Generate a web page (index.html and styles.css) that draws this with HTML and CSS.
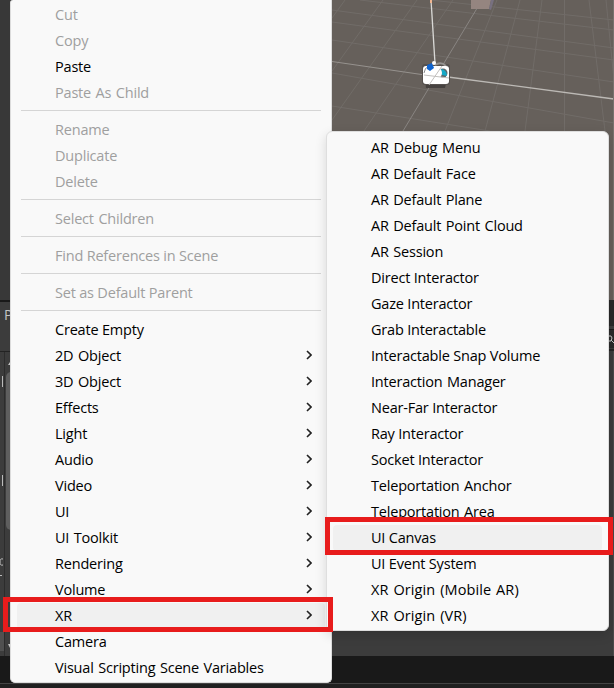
FILE: index.html
```html
<!DOCTYPE html>
<html lang="en">
<head>
<meta charset="utf-8">
<title>Hierarchy context menu</title>
<link rel="stylesheet" href="styles.css">
</head>
<body>
<svg class="editor" width="614" height="688" viewBox="0 0 614 688">
  <rect width="614" height="688" fill="#3c3c3c"/>
  <rect width="10" height="300" fill="#383838"/>
  <rect y="300" width="10" height="2" fill="#191919"/>
  <rect y="351" width="10" height="1" fill="#232323"/>
  <rect x="4" y="352" width="1" height="304" fill="#2c2c2c"/>
  <path d="M8 365l4-6v6z" fill="#c4c4c4"/>
  <rect x="6" y="372" width="20" height="158" rx="5" fill="#5e5e5e"/>
  <path d="M2.500 376v11M2.500 475v11" stroke="#bbb"/>
  <path d="M3 559q-3-1-3 3t3 3M0 575.500h2" stroke="#bbb" fill="none"/>
  <rect y="632" width="4" height="19" fill="#505050"/>
  <path d="M8 644h5l-3 4z" fill="#c4c4c4"/>
  <rect y="656" width="614" height="27" fill="#191919"/>
  <rect y="683" width="614" height="1" fill="#444"/>
  <rect y="684" width="614" height="4" fill="#202020"/>
  <svg x="332" y="0" width="282" height="300" viewBox="332 0 282 300">
    <rect x="332" width="282" height="300" fill="#66605b"/>
    <g stroke="#716c68" fill="none">
      <path d="M332 18L345 0M332 71L383 0M332 120L417 0M364 131L453 0M445 131L497 0M485 131L520 0M525 131L542 0M564.500 131V0M605 131L589 0M614 80L606 0"/>
      <path d="M332 10L614 48M332 22L614 60M332 40L614 82M332 73L614 123M332 106L490 131M360 0L614 30M430 0L614 20"/>
    </g>
    <path d="M403 131L479 5" stroke="#898582"/>
    <path d="M332 61.500L425 75" stroke="#96928e"/>
    <path d="M448 77L614 99" stroke="#bcb9b5" stroke-width="1.300"/>
    <path d="M471 0h20l-2 9h-18z" fill="#958580"/>
    <path d="M491 0h3l-3 10-2-1z" fill="#777080"/>
    <path d="M431 0L435 63" stroke="#d9d8d6" stroke-width="1.300"/>
    <path d="M430 0h2v3h-2z" fill="#f0b590"/>
    <path d="M425 79h22l-2 9h-19z" fill="#45413f"/>
    <rect x="422" y="64" width="28" height="21" rx="3" fill="#56514e"/>
    <path d="M435 65q6-4 11 1" stroke="#969390" stroke-width="2" fill="none"/>
    <rect x="423" y="66" width="26" height="18" rx="3" fill="#fff"/>
    <path d="M424 73q1-6 4-6" stroke="#88898b" fill="none"/>
    <circle cx="443" cy="73" r="4.500" fill="#5b666a"/>
    <path d="M441 69q6 1 6 7l-5-1z" fill="#16a9c7"/>
    <circle cx="436" cy="73" r="6" fill="#fff"/>
    <path d="M427 65l5-2 2 5-4 3-3-2z" fill="#1064cf"/>
    <circle cx="434" cy="63" r="2" fill="#fff"/>
    <path d="M429 85L442 66M424 75l25 3" stroke="#c2c0be"/>
  </svg>
  <rect x="613" width="1" height="300" fill="#77726e"/>
  <rect x="609" y="300" width="5" height="28" fill="#282828"/>
  <rect x="609" y="326" width="5" height="3" fill="#3c3c3c"/>
  <rect x="609" y="329" width="5" height="1" fill="#191919"/>
  <rect x="609" y="330" width="5" height="18" fill="#2a2a2a"/>
  <path d="M609 336h2l1 2-1 3h-2M611 340l3 3" stroke="#c4c4c4" fill="none"/>
  <rect x="609" y="349" width="5" height="2" fill="#242424"/>
  <rect x="609" y="351" width="5" height="280" fill="#3b3b3b"/>
  <rect x="613" y="351" width="1" height="305" fill="#4a4a4a"/>
</svg>
<span class="tab-label">P</span>

<ul class="menu main">
  <li class="off"><span>Cut</span></li>
  <li class="off"><span>Copy</span></li>
  <li><span>Paste</span></li>
  <li class="off"><span>Paste As Child</span></li>
  <li class="sep"></li>
  <li class="off"><span>Rename</span></li>
  <li class="off"><span>Duplicate</span></li>
  <li class="off"><span>Delete</span></li>
  <li class="sep"></li>
  <li class="off"><span>Select Children</span></li>
  <li class="sep"></li>
  <li class="off snug"><span>Find References in Scene</span></li>
  <li class="sep"></li>
  <li class="off snug"><span>Set as Default Parent</span></li>
  <li class="sep"></li>
  <li class="snug"><span>Create Empty</span></li>
  <li><span>2D Object</span><svg class="arrow" viewBox="0 0 6 10"><path d="M1 1l4 4-4 4"/></svg></li>
  <li><span>3D Object</span><svg class="arrow" viewBox="0 0 6 10"><path d="M1 1l4 4-4 4"/></svg></li>
  <li><span>Effects</span><svg class="arrow" viewBox="0 0 6 10"><path d="M1 1l4 4-4 4"/></svg></li>
  <li><span>Light</span><svg class="arrow" viewBox="0 0 6 10"><path d="M1 1l4 4-4 4"/></svg></li>
  <li><span>Audio</span><svg class="arrow" viewBox="0 0 6 10"><path d="M1 1l4 4-4 4"/></svg></li>
  <li><span>Video</span><svg class="arrow" viewBox="0 0 6 10"><path d="M1 1l4 4-4 4"/></svg></li>
  <li><span>UI</span><svg class="arrow" viewBox="0 0 6 10"><path d="M1 1l4 4-4 4"/></svg></li>
  <li><span>UI Toolkit</span><svg class="arrow" viewBox="0 0 6 10"><path d="M1 1l4 4-4 4"/></svg></li>
  <li><span>Rendering</span><svg class="arrow" viewBox="0 0 6 10"><path d="M1 1l4 4-4 4"/></svg></li>
  <li><span>Volume</span><svg class="arrow" viewBox="0 0 6 10"><path d="M1 1l4 4-4 4"/></svg></li>
  <li class="active"><span>XR</span><svg class="arrow" viewBox="0 0 6 10"><path d="M1 1l4 4-4 4"/></svg></li>
  <li><span>Camera</span></li>
  <li><span>Visual Scripting Scene Variables</span></li>
</ul>

<ul class="menu sub">
  <li class="wide"><span>AR Debug Menu</span></li>
  <li><span>AR Default Face</span></li>
  <li><span>AR Default Plane</span></li>
  <li><span>AR Default Point Cloud</span></li>
  <li><span>AR Session</span></li>
  <li class="snug"><span>Direct Interactor</span></li>
  <li class="snug"><span>Gaze Interactor</span></li>
  <li class="snug"><span>Grab Interactable</span></li>
  <li class="snug"><span>Interactable Snap Volume</span></li>
  <li><span>Interaction Manager</span></li>
  <li class="snug"><span>Near-Far Interactor</span></li>
  <li class="snug"><span>Ray Interactor</span></li>
  <li class="snug"><span>Socket Interactor</span></li>
  <li><span>Teleportation Anchor</span></li>
  <li><span>Teleportation Area</span></li>
  <li class="active snug"><span>UI Canvas</span></li>
  <li class="snug"><span>UI Event System</span></li>
  <li class="wider"><span>XR Origin (Mobile AR)</span></li>
  <li class="wider"><span>XR Origin (VR)</span></li>
</ul>

<div class="mark mark-xr"></div>
<div class="mark mark-canvas"></div>
</body>
</html>
```
FILE: styles.css
```css
body {
  margin: 0;
  width: 614px;
  height: 688px;
  position: relative;
  overflow: hidden;
  background: #3c3c3c;
  font-family: "Open Sans", "Noto Sans", sans-serif;
}
.editor { display: block; }
.tab-label {
  position: absolute;
  left: 4px;
  top: 306px;
  font-size: 14px;
  line-height: 18px;
  color: #c4c4c4;
}
.menu {
  position: absolute;
  box-sizing: border-box;
  margin: 0;
  list-style: none;
  background: #f9f9f9;
  font-size: 14.5px;
  letter-spacing: -0.2px;
  word-spacing: 1px;
  color: #000;
}
.main {
  left: 10px;
  top: 0;
  width: 322px;
  height: 683px;
  padding: 2px 0 0;
  border: solid #dcdcdc;
  border-width: 0 1px 1px;
  border-radius: 3px 0 5px 5px;
}
.sub {
  left: 326px;
  top: 131px;
  width: 283px;
  height: 500px;
  padding: 3px 0 0;
  border: 1px solid #dedede;
  border-radius: 6px;
  box-shadow: 0 4px 12px rgba(0, 0, 0, 0.14);
}
.menu li {
  display: flex;
  align-items: center;
  justify-content: space-between;
  box-sizing: border-box;
  height: 26px;
  margin: 0 6px;
  padding: 0 13px 2px 38px;
  border-radius: 4px;
  white-space: nowrap;
}
.menu .off { color: #9f9f9f; }
.menu .active { background: #f0f0f0; }
.menu .snug { word-spacing: 0; }
.menu .wide { letter-spacing: -0.1px; }
.menu .wider { letter-spacing: 0.1px; }
.menu .sep {
  height: 1px;
  margin: 4px 10px 6px;
  padding: 0;
  border-radius: 0;
  background: #d5d5d5;
}
.arrow {
  width: 6px;
  height: 10px;
  fill: none;
  stroke: #222;
  stroke-width: 1.6;
}
.mark {
  position: absolute;
  box-sizing: border-box;
  border: 5px solid #e81c1c;
}
.mark-xr {
  left: 3px;
  top: 597px;
  width: 330px;
  height: 35px;
}
.mark-canvas {
  left: 325px;
  top: 517px;
  width: 288px;
  height: 38px;
}
```
